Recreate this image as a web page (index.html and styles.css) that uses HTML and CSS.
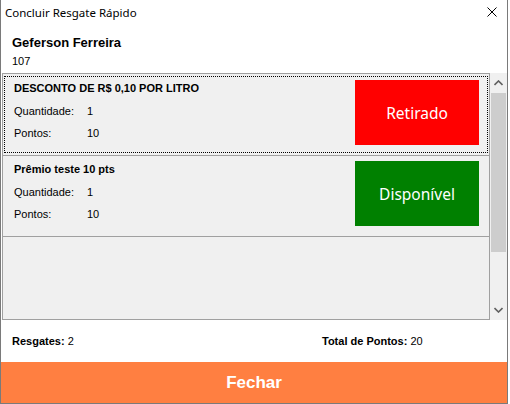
FILE: index.html
```html
<!DOCTYPE html>
<html lang="pt-BR">
<head>
    <meta charset="UTF-8">
    <title>Concluir Resgate Rápido</title>
    <link rel="stylesheet" href="styles.css">
</head>
<body>

    <div class="window">
        <!-- Title bar -->
        <div class="titlebar">
            <span class="title">Concluir Resgate Rápido</span>
            <svg class="close" width="10" height="10" viewBox="0 0 10 10">
                <path d="M0.5 0.5 L9.5 9.5 M9.5 0.5 L0.5 9.5" stroke="#000" stroke-width="1" fill="none"/>
            </svg>
        </div>

        <!-- Customer -->
        <div class="customer">
            <div class="customer-name">Geferson Ferreira</div>
            <div class="customer-id">107</div>
        </div>

        <!-- Rewards list -->
        <div class="list-area">
            <div class="list">
                <div class="reward-item focused">
                    <div class="reward-info">
                        <div class="reward-name">DESCONTO DE R$ 0,10 POR LITRO</div>
                        <div class="reward-row"><span class="label">Quantidade:</span><span>1</span></div>
                        <div class="reward-row"><span class="label">Pontos:</span><span>10</span></div>
                    </div>
                    <div class="status status-taken">Retirado</div>
                </div>
                <div class="reward-item">
                    <div class="reward-info">
                        <div class="reward-name">Prêmio teste 10 pts</div>
                        <div class="reward-row"><span class="label">Quantidade:</span><span>1</span></div>
                        <div class="reward-row"><span class="label">Pontos:</span><span>10</span></div>
                    </div>
                    <div class="status status-free">Disponível</div>
                </div>
            </div>
            <div class="scrollbar">
                <svg class="arrow" width="9" height="6" viewBox="0 0 9 6">
                    <path d="M0.5 5 L4.5 1 L8.5 5" stroke="#606060" stroke-width="1.6" fill="none"/>
                </svg>
                <div class="thumb"></div>
                <div class="track"></div>
                <svg class="arrow" width="9" height="6" viewBox="0 0 9 6">
                    <path d="M0.5 1 L4.5 5 L8.5 1" stroke="#606060" stroke-width="1.6" fill="none"/>
                </svg>
            </div>
        </div>

        <!-- Totals -->
        <div class="totals">
            <div class="total-count"><b>Resgates:</b> 2</div>
            <div class="total-points"><b>Total de Pontos:</b> 20</div>
        </div>

        <button class="close-button">Fechar</button>
    </div>

</body>
</html>
```

FILE: styles.css
```css
body {
    margin: 0;
    padding: 0;
    background-color: #fff;
    font-family: "Liberation Sans", Arial, sans-serif;
    font-size: 11px;
    color: #000;
}

.window {
    width: 508px;
    height: 404px;
    box-sizing: border-box;
    border: 1px solid #7a7a7a;
    border-top: none;
    display: flex;
    flex-direction: column;
    background-color: #fff;
}

.titlebar {
    height: 24px;
    display: flex;
    align-items: center;
    justify-content: space-between;
    padding: 0 10px 0 4px;
}

.title {
    font-family: "Noto Sans", sans-serif;
    font-size: 11.5px;
}

.customer {
    padding: 10px 11px 0;
    height: 39px;
}

.customer-name {
    font-weight: bold;
    font-size: 13px;
    line-height: 18px;
}

.customer-id {
    line-height: 18px;
}

.list-area {
    display: flex;
    margin-left: 1px;
    height: 247px;
}

.list {
    flex: 1;
    border: 1px solid #a0a0a0;
    background-color: #f0f0f0;
    padding-top: 1px;
}

.reward-item {
    height: 81px;
    box-sizing: border-box;
    border-bottom: 1px solid #a0a0a0;
    display: flex;
    justify-content: space-between;
    padding: 5px 10px 0 10px;
    position: relative;
}

.reward-item.focused::after {
    content: "";
    position: absolute;
    left: 1px;
    right: 1px;
    top: 1px;
    bottom: 2px;
    border: 1px dotted #000;
}

.reward-info {
    padding-left: 1px;
}

.reward-name {
    font-weight: bold;
    line-height: 14px;
    margin-top: 1px;
}

.reward-row {
    display: flex;
    line-height: 22px;
    margin-top: 5px;
}

.reward-row + .reward-row {
    margin-top: 0;
}

.label {
    width: 73px;
}

.status {
    width: 124px;
    height: 65px;
    display: flex;
    align-items: center;
    justify-content: center;
    color: #fff;
    font-family: "Noto Sans", sans-serif;
    font-size: 15.5px;
}

.status-taken {
    background-color: #ff0000;
}

.status-free {
    background-color: #008000;
}

.scrollbar {
    width: 17px;
    background-color: #f0f0f0;
    display: flex;
    flex-direction: column;
    align-items: center;
}

.arrow {
    margin: 7px 0;
}

.thumb {
    width: 15px;
    height: 159px;
    background-color: #cdcdcd;
}

.track {
    flex: 1;
}

.totals {
    display: flex;
    padding: 0 11px;
    height: 42px;
    align-items: center;
}

.total-count {
    width: 310px;
}

.close-button {
    flex: 1;
    border: none;
    background-color: #ff7f41;
    color: #fff;
    font-family: "Liberation Sans", Arial, sans-serif;
    font-weight: bold;
    font-size: 17px;
    padding: 0;
    cursor: pointer;
}
```
